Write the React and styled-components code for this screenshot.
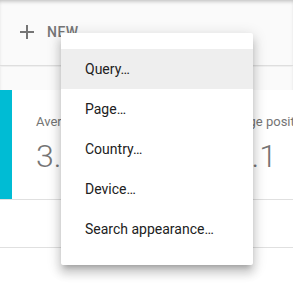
import React from "react";
import styled, { createGlobalStyle } from "styled-components";

const Global = createGlobalStyle`
  html, body { margin: 0; padding: 0; background: #fff; }
  body { font-family: Roboto, "Noto Sans", Arial, sans-serif; -webkit-font-smoothing: antialiased; }
  #root { width: 293px; height: 286px; overflow: hidden; }
`;

const Page = styled.div`
  position: relative;
  width: 293px;
  height: 286px;
  overflow: hidden;
  background: #fff;
  display: flex;
  flex-direction: column;
`;

const TopArea = styled.div`
  background: #fafafa;
  box-shadow: inset 0 3px 4px -2px rgba(0, 0, 0, 0.28);
  display: flex;
  flex-direction: column;
`;

const Toolbar = styled.div`
  height: 65px;
  display: flex;
  align-items: center;
  padding-left: 15px;
  border-bottom: 1px solid #dedede;
  box-shadow: 0 1px 0 #efefef;
`;

const NewButton = styled.button`
  display: flex;
  align-items: center;
  gap: 8px;
  background: none;
  border: 0;
  padding: 0;
  margin-top: -1px;
  font-family: Roboto, sans-serif;
  font-size: 14px;
  font-weight: 500;
  letter-spacing: 0.5px;
  color: #757575;
`;

const FilterStrip = styled.div`
  height: 24px;
`;

const CardsRow = styled.div`
  display: flex;
  height: 109px;
  border-bottom: 1px solid #e0e0e0;
`;

const SelectedEdge = styled.div`
  flex: 0 0 12px;
  background: #00bcd4;
`;

const Card = styled.div`
  flex: 0 0 180px;
  background: #fff;
  padding: 22px 0 0 24px;
  box-sizing: border-box;
  white-space: nowrap;
  overflow: hidden;
`;

const Label = styled.div`
  font-size: 13px;
  line-height: 20px;
  color: #757575;
`;

const Value = styled.div`
  font-size: 32px;
  font-weight: 300;
  line-height: 40px;
  color: #757575;
  margin-top: 4px;
`;

const EmptyRow = styled.div`
  height: 47px;
  border-bottom: 1px solid #e0e0e0;
`;

const Menu = styled.ul`
  position: absolute;
  left: 61px;
  top: 33px;
  width: 192px;
  margin: 0;
  padding: 16px 0;
  list-style: none;
  background: #fff;
  border-radius: 2px;
  box-shadow: 0 8px 10px 1px rgba(0, 0, 0, 0.14), 0 3px 14px 2px rgba(0, 0, 0, 0.12),
    0 5px 5px -3px rgba(0, 0, 0, 0.2);
`;

const MenuItem = styled.li`
  height: 40px;
  display: flex;
  align-items: center;
  padding: 0 24px;
  font-size: 14px;
  color: #212121;
  background: ${(p) => (p.$active ? "#eeeeee" : "transparent")};
`;

const PlusIcon = () => (
  <svg width="24" height="24" viewBox="0 0 24 24" fill="#757575">
    <path d="M19 13h-6v6h-2v-6H5v-2h6V5h2v6h6v2z" />
  </svg>
);

const items = ["Query…", "Page…", "Country…", "Device…", "Search appearance…"];

export default function App() {
  return (
    <>
      <Global />
      <Page>
        <TopArea>
          <Toolbar>
            <NewButton>
              <PlusIcon />
              NEW
            </NewButton>
          </Toolbar>
          <FilterStrip />
        </TopArea>
        <CardsRow>
          <SelectedEdge />
          <Card>
            <Label>Average CTR</Label>
            <Value>3.1%</Value>
          </Card>
          <Card>
            <Label>Average position</Label>
            <Value>14.1</Value>
          </Card>
        </CardsRow>
        <EmptyRow />
        <Menu>
          {items.map((t, i) => (
            <MenuItem key={t} $active={i === 0}>
              {t}
            </MenuItem>
          ))}
        </Menu>
      </Page>
    </>
  );
}
